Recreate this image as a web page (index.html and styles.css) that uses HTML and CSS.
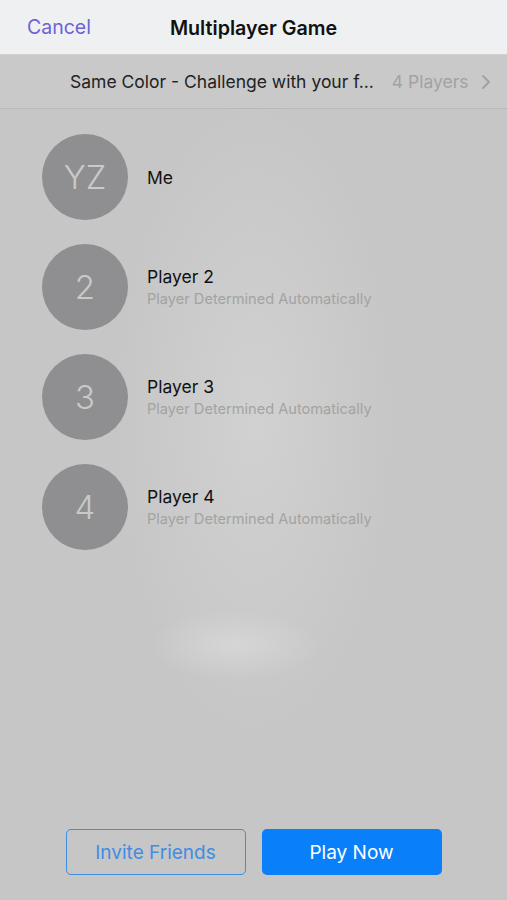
FILE: index.html
```html
<!DOCTYPE html>
<html lang="en">
<head>
    <meta charset="UTF-8">
    <meta name="viewport" content="width=device-width, initial-scale=1.0">
    <title>Multiplayer Game</title>
    <link rel="stylesheet" href="styles.css">
</head>
<body>
    <div class="page">
        <div class="navbar">
            <span class="cancel">Cancel</span>
            <span class="title">Multiplayer Game</span>
        </div>
        <div class="game-row">
            <span class="game-name">Same Color - Challenge with your f...</span>
            <span class="game-count">4 Players</span>
            <svg class="chevron" width="10" height="16" viewBox="0 0 10 16">
                <path d="M2 2 L8 8 L2 14" fill="none" stroke="#a2a2a2" stroke-width="2" stroke-linecap="round" stroke-linejoin="round"/>
            </svg>
        </div>

        <div class="players">
            <div class="player">
                <div class="avatar">YZ</div>
                <div class="info">
                    <div class="name">Me</div>
                </div>
            </div>
            <div class="player">
                <div class="avatar">2</div>
                <div class="info">
                    <div class="name">Player 2</div>
                    <div class="sub">Player Determined Automatically</div>
                </div>
            </div>
            <div class="player">
                <div class="avatar">3</div>
                <div class="info">
                    <div class="name">Player 3</div>
                    <div class="sub">Player Determined Automatically</div>
                </div>
            </div>
            <div class="player">
                <div class="avatar">4</div>
                <div class="info">
                    <div class="name">Player 4</div>
                    <div class="sub">Player Determined Automatically</div>
                </div>
            </div>
        </div>

        <div class="actions">
            <button class="btn btn-outline">Invite Friends</button>
            <button class="btn btn-fill">Play Now</button>
        </div>
    </div>
</body>
</html>
```

FILE: styles.css
```css
* {
    margin: 0;
    padding: 0;
    box-sizing: border-box;
}
body {
    font-family: Inter, "Noto Sans", sans-serif;
    background-color: #c6c6c6;
}
.page {
    height: 900px;
    display: flex;
    flex-direction: column;
    background:
        radial-gradient(ellipse 85px 35px at 235px 645px, rgba(222,222,222,0.6), rgba(222,222,222,0)),
        radial-gradient(ellipse 140px 320px at 255px 420px, rgba(212,212,212,0.8), rgba(212,212,212,0)),
        #c6c6c6;
}
.navbar {
    height: 55px;
    display: flex;
    align-items: center;
    justify-content: center;
    position: relative;
    background-color: #eef0f1;
    border-bottom: 1px solid #cfcfcf;
}
.cancel {
    position: absolute;
    left: 27px;
    top: 15px;
    font-size: 19.5px;
    color: #6b62d6;
}
.title {
    font-size: 19.7px;
    font-weight: 600;
    color: #111;
    padding-top: 1px;
}
.game-row {
    height: 54px;
    display: flex;
    align-items: center;
    padding-left: 70px;
    background-color: #c9c9c9;
    border-bottom: 1px solid #b9b9b9;
}
.game-name {
    font-size: 17.5px;
    color: #222;
}
.game-count {
    margin-left: 18px;
    font-size: 17.5px;
    color: #a2a2a2;
}
.chevron {
    margin-left: 12px;
}
.players {
    padding: 25px 0 0 42px;
}
.player {
    height: 110px;
    display: flex;
}
.avatar {
    width: 86px;
    height: 86px;
    border-radius: 50%;
    background-color: #8f8f91;
    color: #c9c9c9;
    font-size: 33px;
    font-weight: 300;
    display: flex;
    align-items: center;
    justify-content: center;
}
.info {
    height: 86px;
    display: flex;
    flex-direction: column;
    justify-content: center;
    padding-left: 19px;
}
.name {
    font-size: 17.5px;
    color: #111;
}
.sub {
    margin-top: 3px;
    font-size: 14.6px;
    color: #a3a3a3;
}
.actions {
    margin-top: auto;
    padding-bottom: 25px;
    display: flex;
    justify-content: center;
    gap: 16px;
}
.btn {
    width: 180px;
    height: 46px;
    border-radius: 5px;
    font-family: Inter, "Noto Sans", sans-serif;
    font-size: 19px;
}
.btn-outline {
    background-color: transparent;
    border: 1.5px solid #3f8de3;
    color: #3f8de3;
}
.btn-fill {
    background-color: #0a7ffa;
    border: none;
    color: #fff;
}
```
